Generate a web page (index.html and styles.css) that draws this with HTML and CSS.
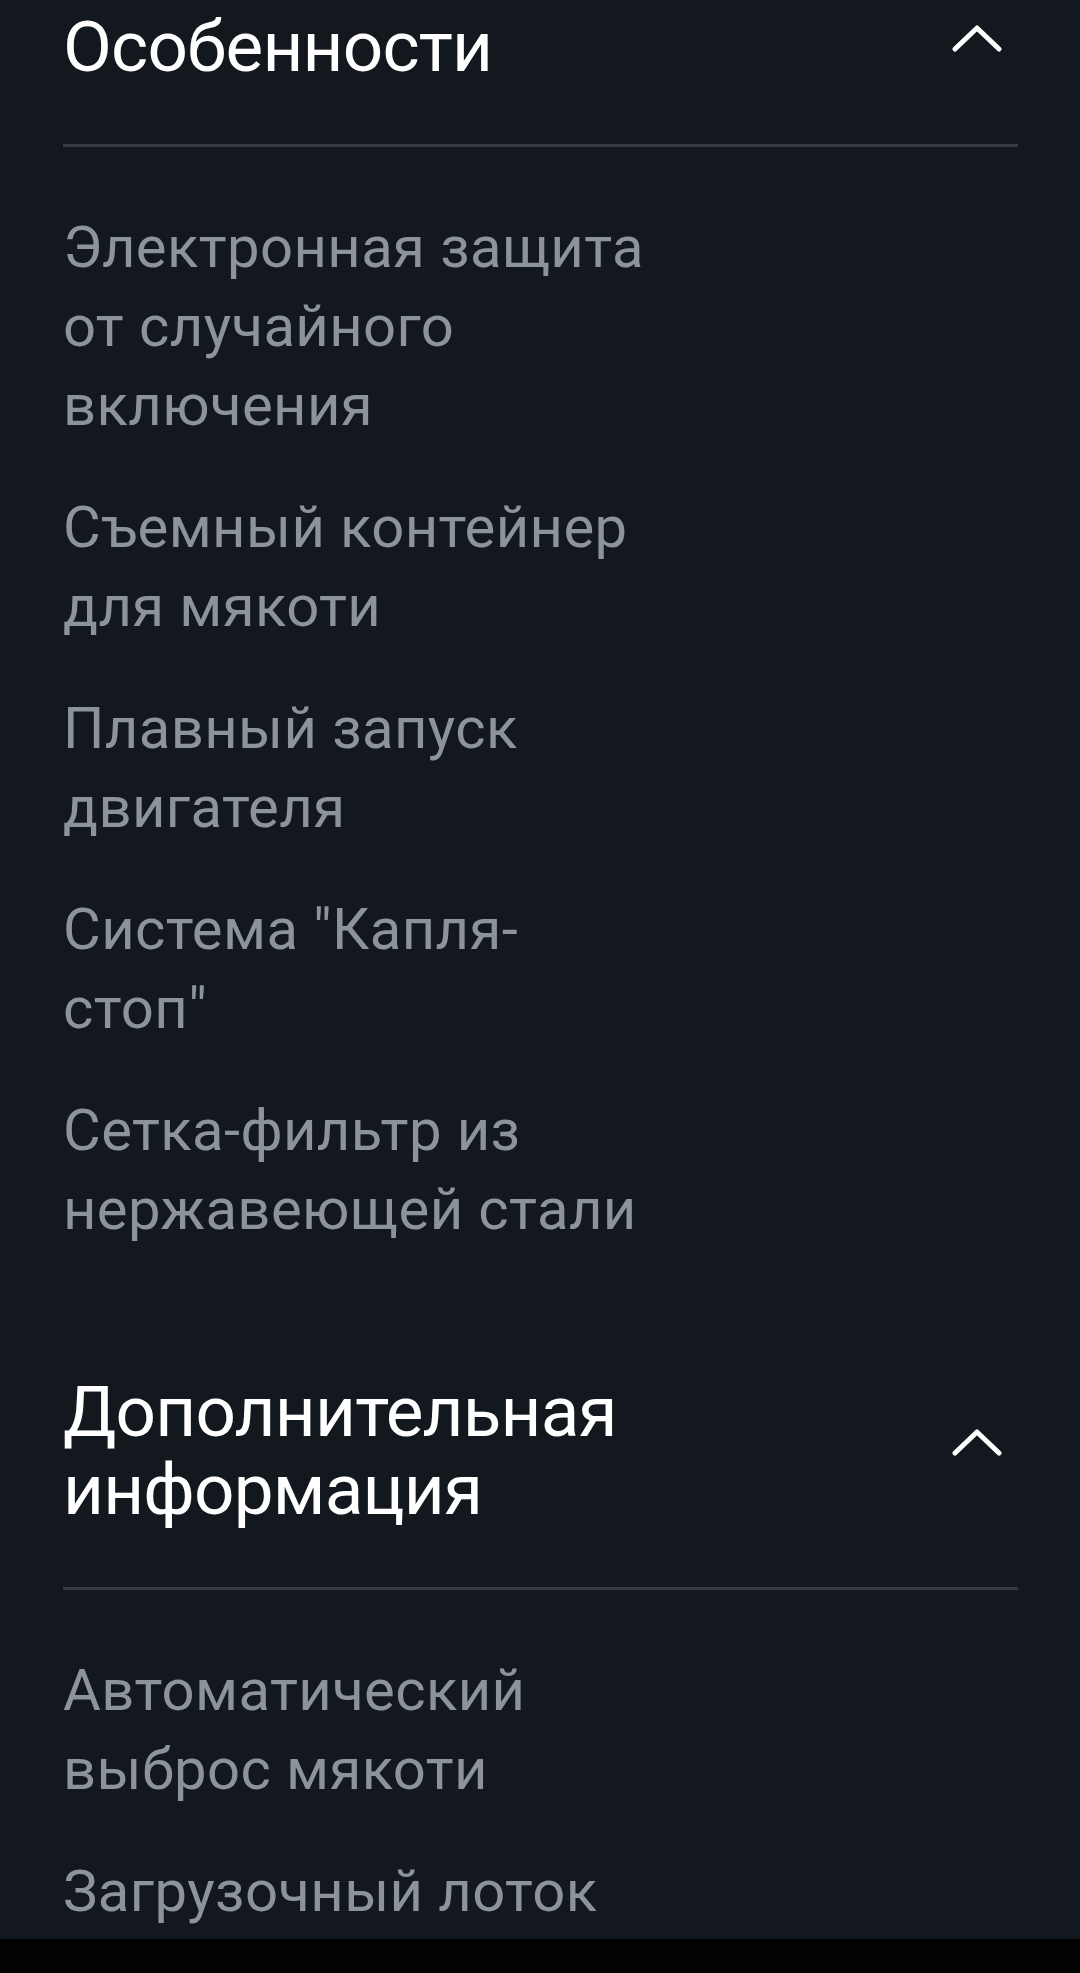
FILE: index.html
```html
<!DOCTYPE html>
<html lang="ru">
<head>
<meta charset="utf-8">
<title>Характеристики</title>
<link rel="stylesheet" href="styles.css">
</head>
<body>
<main class="page">
  <section class="spec">
    <header class="spec-head">
      <h2 class="spec-title">Особенности</h2>
      <svg class="chevron" viewBox="0 0 50 50" aria-hidden="true">
        <path d="M3 24 L25 3 L47 24" />
      </svg>
    </header>
    <ul class="spec-list">
      <li>Электронная защита<br>от случайного<br>включения</li>
      <li>Съемный контейнер<br>для мякоти</li>
      <li>Плавный запуск<br>двигателя</li>
      <li>Система "Капля-<br>стоп"</li>
      <li>Сетка-фильтр из<br>нержавеющей стали</li>
    </ul>
  </section>

  <section class="spec">
    <header class="spec-head">
      <h2 class="spec-title">Дополнительная<br>информация</h2>
      <svg class="chevron" viewBox="0 0 50 50" aria-hidden="true">
        <path d="M3 24 L25 3 L47 24" />
      </svg>
    </header>
    <ul class="spec-list">
      <li>Автоматический<br>выброс мякоти</li>
      <li>Загрузочный лоток</li>
    </ul>
  </section>
</main>
<div class="nav-bar"></div>
</body>
</html>
```
FILE: styles.css
```css
html, body {
  margin: 0;
  padding: 0;
}

body {
  width: 1080px;
  height: 1973px;
  overflow: hidden;
  background: #13171e;
  font-family: Roboto, "Noto Sans", sans-serif;
  position: relative;
}

.page {
  padding: 8px 62px 0 63px;
}

.spec + .spec {
  margin-top: 124px;
}

.spec-head {
  display: flex;
  align-items: center;
  justify-content: space-between;
  padding-bottom: 58px;
  border-bottom: 3px solid #363a3f;
}

.spec-title {
  margin: 0;
  font-size: 71px;
  line-height: 78px;
  font-weight: 400;
  color: #ffffff;
  letter-spacing: -0.8px;
}

.chevron {
  width: 50px;
  height: 50px;
  margin-right: 16px;
  margin-top: 6px;
  flex: none;
  fill: none;
  stroke: #ffffff;
  stroke-width: 5;
  stroke-linecap: round;
  stroke-linejoin: round;
}

.spec-list {
  list-style: none;
  margin: 0;
  padding: 61px 0 0;
  display: flex;
  flex-direction: column;
  gap: 43px;
}

.spec-list li {
  font-size: 58px;
  line-height: 79px;
  color: #8c939c;
  letter-spacing: 0.4px;
}

.nav-bar {
  position: absolute;
  left: 0;
  right: 0;
  bottom: 0;
  height: 34px;
  background: #020203;
}
```
